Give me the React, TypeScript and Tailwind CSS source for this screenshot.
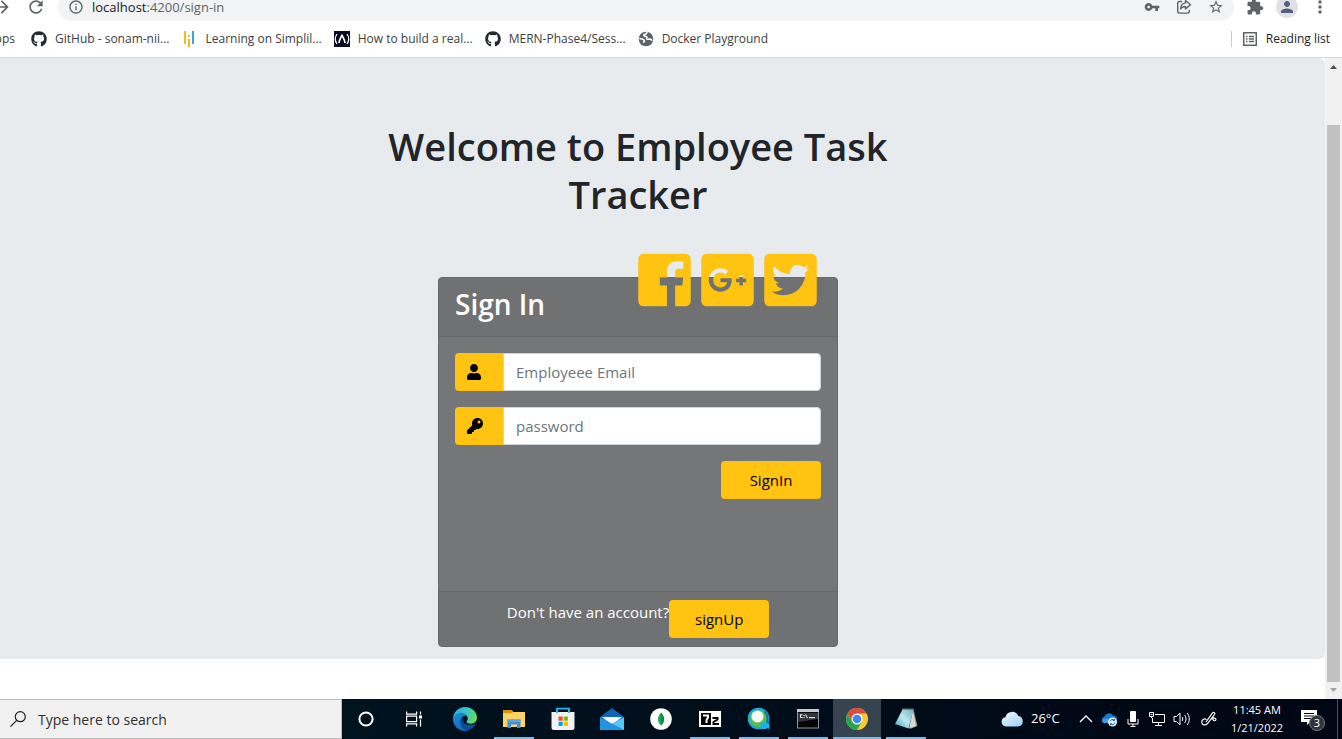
import type { ReactNode } from "react";
import { FaGooglePlusSquare, FaTwitterSquare, FaUser, FaKey, FaGithub } from "react-icons/fa";
import {
  MdArrowForward,
  MdRefresh,
  MdInfoOutline,
  MdVpnKey,
  MdStarBorder,
  MdExtension,
  MdPerson,
  MdMoreVert,
} from "react-icons/md";

function FacebookSquare() {
  return (
    <svg viewBox="0 0 448 512" className="h-[60px] w-[53px]" fill="currentColor" aria-hidden="true">
      <path d="M448 80v352c0 26.500-21.500 48-48 48h-85.300V302.800h60.600l8.700-67.600h-69.300V192c0-19.600 5.400-32.900 33.500-32.900H384V98.700c-6.200-.8-27.400-2.700-52.200-2.700-51.600 0-87 31.500-87 89.400v49.900H184v67.600h60.900V480H48c-26.500 0-48-21.500-48-48V80c0-26.500 21.500-48 48-48h352c26.500 0 48 21.500 48 48z" />
    </svg>
  );
}

function BarsIcon() {
  return (
    <svg viewBox="0 0 16 16" className="size-4" aria-hidden="true">
      <path d="M3 0v13" stroke="#f9b812" strokeWidth="2" />
      <path d="M7 4v2M7 8v8" stroke="#f9b812" strokeWidth="2" />
      <path d="M11 0v13" stroke="#3ba5d8" strokeWidth="2" />
    </svg>
  );
}

function CampIcon() {
  return (
    <svg viewBox="0 0 16 16" className="size-4" fill="none" stroke="#fff" aria-hidden="true">
      <rect width="16" height="16" fill="#0a0a23" stroke="none" />
      <path d="M3 3C.9 6 .9 10 3 13M13 3c2.100 3 2.100 7 0 10" strokeWidth="1.200" />
      <path d="M8 3.500C7.800 6 5.200 8 5 12M8 3.500C8.200 6 10.800 8 11 12" strokeWidth="1.700" />
    </svg>
  );
}

function GlobeIcon() {
  return (
    <svg viewBox="0 0 16 16" className="size-4" aria-hidden="true">
      <circle cx="8" cy="8" r="7.300" fill="#5f6368" />
      <path d="M9.500 1.200C8 2 8.800 3 7 3.200S5.500 5 7 5.300s2.400.6 1.800 1.900 1.600 1 3 .9 2.200 1.500 2.200 1.500M1.300 7.500c2 .2 3.400.5 4.600 1.400s.2 2.300-.9 2.500" fill="none" stroke="#fff" strokeWidth="1.600" />
    </svg>
  );
}

function ShareIcon() {
  return (
    <svg viewBox="0 0 16 16" className="size-4" fill="none" stroke="#5f6368" strokeWidth="1.400" strokeLinejoin="round" aria-hidden="true">
      <path d="M6 2.500H3.500a1.800 1.800 0 0 0-1.800 1.800v8a1.800 1.800 0 0 0 1.800 1.800h8a1.800 1.800 0 0 0 1.800-1.800v-1.500" />
      <path d="M9.500 1.500 14.500 5.700 9.500 9.900V7.500C7 7.500 5.600 8.300 4.600 10c.2-3.200 1.700-5.700 4.900-6.100z" />
    </svg>
  );
}

function ReadingListIcon() {
  return (
    <svg viewBox="0 0 16 16" className="size-4" fill="none" stroke="#5f6368" aria-hidden="true">
      <rect x="1.750" y="1.750" width="12.500" height="12.500" strokeWidth="1.500" />
      <path d="M4 5.500h1.500M4 8h1.500M4 10.500h1.500M6.800 5.500H12M6.800 8H12M6.800 10.500H12" strokeWidth="1.300" />
    </svg>
  );
}

function Bookmark({ icon, label }: { icon: ReactNode; label: string }) {
  return (
    <a href="#" className="flex items-center gap-2 whitespace-nowrap">
      {icon}
      {label}
    </a>
  );
}

function BrowserBar() {
  return (
    <header className="shrink-0 border-b border-[#d5d7d9] bg-white text-[#3c4043]">
      <div className="flex h-[21px] items-end overflow-hidden">
        <div className="flex h-7 w-full shrink-0 items-center text-[#5f6368]">
          <button aria-label="Forward" className="-ml-2">
            <MdArrowForward className="size-5" />
          </button>
          <button aria-label="Reload" className="ml-3.5">
            <MdRefresh className="size-5" />
          </button>
          <div className="ml-3 flex h-7 flex-1 items-center rounded-full bg-[#f1f3f4] pr-2.5 pl-2.5">
            <MdInfoOutline className="size-4" />
            <span className="ml-2 flex-1 text-[13px] leading-[14px]">
              <span className="text-[#202124]">localhost</span>:4200/sign-in
            </span>
            <span className="flex items-center gap-4">
              <MdVpnKey className="size-4" />
              <ShareIcon />
              <MdStarBorder className="size-4" />
            </span>
          </div>
          <button aria-label="Extensions" className="ml-3">
            <MdExtension className="size-[18px]" />
          </button>
          <button aria-label="Profile" className="ml-3 flex size-[22px] items-center justify-center rounded-full bg-[#dee1e6] text-[#55607a]">
            <MdPerson className="size-[18px]" />
          </button>
          <button aria-label="Menu" className="mr-3 ml-3">
            <MdMoreVert className="size-5" />
          </button>
        </div>
      </div>
      <nav className="flex h-9 items-center gap-3 text-xs">
        <a href="#" className="mr-1 flex w-[15px] justify-end overflow-hidden">
          Apps
        </a>
        <Bookmark icon={<FaGithub className="size-4 text-[#24292e]" />} label="GitHub - sonam-nii..." />
        <Bookmark icon={<BarsIcon />} label="Learning on Simplil..." />
        <Bookmark icon={<CampIcon />} label="How to build a real..." />
        <Bookmark icon={<FaGithub className="size-4 text-[#24292e]" />} label="MERN-Phase4/Sess..." />
        <Bookmark icon={<GlobeIcon />} label="Docker Playground" />
        <div className="mr-3 ml-auto flex h-4 items-center border-l border-[#c6c9cd] pl-2.5 text-[#202124]">
          <Bookmark icon={<ReadingListIcon />} label="Reading list" />
        </div>
      </nav>
    </header>
  );
}

const yellowButton = "h-[38px] w-[100px] shrink-0 rounded bg-[#ffc312] text-[15px] text-black";

function Field({ id, label, type, icon }: { id: string; label: string; type: string; icon: ReactNode }) {
  return (
    <div className="mb-4 flex h-[38px]">
      <label htmlFor={id} aria-label={label} className="flex w-12 items-center rounded-l bg-[#ffc312] pl-3 text-black">
        {icon}
      </label>
      <input
        id={id}
        type={type}
        placeholder={label}
        className="min-w-0 flex-1 rounded-r border border-[#ced4da] bg-white px-3 text-[15px] text-[#495057] placeholder:text-[#6c757d]"
      />
    </div>
  );
}

function SignInCard() {
  return (
    <section className="relative flex h-[370px] w-[400px] flex-col rounded border border-[#68696b] bg-[#747677]">
      <div className="h-[59px] border-b border-[#646667] bg-[#6f7173] px-4 py-2">
        <h3 className="text-[28px] leading-9 font-semibold text-white">Sign In</h3>
      </div>
      <div className="absolute -top-7 right-5 flex gap-2.5 text-[#ffc312]">
        <a href="#" aria-label="Facebook">
          <FacebookSquare />
        </a>
        <a href="#" aria-label="Google Plus">
          <FaGooglePlusSquare className="h-[60px] w-[53px]" />
        </a>
        <a href="#" aria-label="Twitter">
          <FaTwitterSquare className="h-[60px] w-[53px]" />
        </a>
      </div>
      <form className="flex-1 p-4">
        <Field id="email" label="Employeee Email" type="email" icon={<FaUser className="h-4 w-3.5" />} />
        <Field id="password" label="password" type="password" icon={<FaKey className="size-4" />} />
        <div className="flex justify-end">
          <button type="button" className={yellowButton}>
            SignIn
          </button>
        </div>
      </form>
      <div className="flex h-[55px] items-start justify-center border-t border-[#646667] bg-[#6f7173] pt-2 text-[15px] leading-6 text-white">
        <span>Don't have an account?</span>
        <button type="button" className={yellowButton}>
          signUp
        </button>
      </div>
    </section>
  );
}

function Scrollbar() {
  return (
    <div className="flex w-[17px] shrink-0 flex-col items-center bg-[#f1f1f1]" aria-hidden="true">
      <svg viewBox="0 0 17 17" className="size-[17px] shrink-0">
        <path d="M5 11h7L8.500 7z" fill="#505050" />
      </svg>
      <div className="mt-[50px] w-[13px] flex-1 bg-[#c1c1c1]" />
      <svg viewBox="0 0 17 17" className="size-[17px] shrink-0">
        <path d="M5 6h7l-3.500 4z" fill="#a3a3a3" />
      </svg>
    </div>
  );
}

function TaskButton({ label, state, children }: { label: string; state?: "open" | "active"; children: ReactNode }) {
  return (
    <button
      aria-label={label}
      className={`relative flex h-10 w-12 items-center justify-center ${state === "active" ? "bg-[#36444f]" : ""}`}
    >
      {children}
      {state && (
        <span className={`absolute bottom-0 h-0.5 bg-[#76b9ed] ${state === "active" ? "inset-x-0" : "inset-x-1"}`} />
      )}
    </button>
  );
}

function Taskbar() {
  return (
    <footer className="flex h-10 shrink-0 items-center bg-gradient-to-r from-[#001822] to-[#000614] text-white">
      <label className="flex h-10 w-[342px] shrink-0 items-center border border-l-0 border-[#bdbdbd] bg-[#f0f0f0] pl-2.5">
        <svg viewBox="0 0 16 16" className="size-4 shrink-0" fill="none" stroke="#222" strokeWidth="1.200" aria-hidden="true">
          <circle cx="10.300" cy="5.700" r="5" />
          <path d="M6.700 9.300.4 15.600" />
        </svg>
        <input
          aria-label="Search"
          placeholder="Type here to search"
          className="ml-3 min-w-0 flex-1 bg-transparent pt-0.5 text-sm placeholder:text-[#303030]"
        />
      </label>
      <TaskButton label="Cortana">
        <svg viewBox="0 0 16 16" className="size-4">
          <circle cx="8" cy="8" r="6.600" fill="none" stroke="#fff" strokeWidth="2" />
        </svg>
      </TaskButton>
      <TaskButton label="Task view">
        <svg viewBox="0 0 18 16" className="h-4 w-[18px]" fill="none" stroke="#fff" strokeWidth="1.200">
          <path d="M1.600.5v2.700h10V.5M1.600 15.500v-2.700h10v2.700M1.600 5.200h10v5.400h-10zM15.500.5v3M15.500 8.500v7" />
          <path d="M14 4.500h3v3h-3z" fill="#fff" stroke="none" />
        </svg>
      </TaskButton>
      <div className="ml-[3px] flex gap-px">
        <TaskButton label="Edge">
          <svg viewBox="0 0 24 24" className="size-6">
            <defs>
              <linearGradient id="edgeTop" x1="0" y1=".3" x2="1" y2=".5">
                <stop offset="0" stopColor="#2aa8e8" />
                <stop offset=".55" stopColor="#35c6c9" />
                <stop offset="1" stopColor="#68df58" />
              </linearGradient>
              <linearGradient id="edgeSide" x1="0" y1="0" x2=".5" y2="1">
                <stop offset="0" stopColor="#1893dc" />
                <stop offset="1" stopColor="#1266b8" />
              </linearGradient>
            </defs>
            <path d="M0 12C0 5 5.500 0 12 0c7 0 12 5 12 10.800 0 3.700-2.800 6-6.200 6-2.800 0-4.300-1-4.300-2 0-.7 1.300-1.300 1.300-3.200 0-2.800-2.800-5.200-6.300-5.200C4.200 6.400 1 9 0 12z" fill="url(#edgeTop)" />
            <path d="M0 12c.4-3.700 4-5.600 8.500-5.600 2.500 0 4.500 1 5.500 2.500-3-.6-6 1.200-6.400 4.700-.4 4.500 3.200 8.800 8.400 9.400-1.200.6-2.600 1-4 1C5.500 24 0 19 0 12z" fill="url(#edgeSide)" />
            <path d="M9.600 9.900c-3.200 2.300-3 7.800 0 11 2 2.100 4.400 2.600 6.400 2.100 2.800-1 5.200-3 6.600-5.300.3-.6-.1-.9-.7-.6-4 1.900-9.800.9-11.700-2.600-.8-1.500-.9-3.200-.6-4.600z" fill="#0c4c96" />
          </svg>
        </TaskButton>
        <TaskButton label="File Explorer" state="open">
          <svg viewBox="0 0 22 20" className="h-5 w-[22px]">
            <path d="M0 1.500h9l1.500 1.500H22v15H0z" fill="#f0b93c" />
            <path d="M0 4.500h9L10.500 3H22v15H0z" fill="#fdd463" />
            <path d="M0 1h8.500L10 2.500 8.500 4H0z" fill="#dc940f" />
            <path d="M4.500 10.500h13V19h-3.500v-3.500H8V19H4.500z" fill="#3c8fd5" />
            <path d="M4.500 10.500h13V13h-13z" fill="#5aa6e2" />
          </svg>
        </TaskButton>
        <TaskButton label="Microsoft Store">
          <svg viewBox="0 0 24 24" className="size-6">
            <path d="M6 6V1.700h12V6" fill="none" stroke="#2fb4e9" strokeWidth="1.800" />
            <path d="M.5 5h23v15.500A2.500 2.500 0 0 1 21 23H3a2.500 2.500 0 0 1-2.500-2.500z" fill="#f1f2f3" />
            <path d="M6 6V3M18 6V3" stroke="#2fb4e9" strokeWidth="1.800" />
            <path d="M7.500 9.500h4.200v4.200H7.500z" fill="#f25022" />
            <path d="M12.700 9.500h4.200v4.200h-4.200z" fill="#7fba00" />
            <path d="M7.500 14.700h4.200v4.200H7.500z" fill="#00a4ef" />
            <path d="M12.700 14.700h4.200v4.200h-4.200z" fill="#ffb900" />
          </svg>
        </TaskButton>
        <TaskButton label="Mail">
          <svg viewBox="0 0 24 24" className="size-6">
            <path d="M0 10 12 1l12 9v12H0z" fill="#1163b5" />
            <path d="M2 10h20L12 18z" fill="#f4f7fa" />
            <path d="M0 10.500 12 17l12-6.500V23H0z" fill="#35b0ee" />
            <path d="M24 10.500V23L12 16.500z" fill="#54c7f6" />
            <path d="M0 10.500V23h24z" fill="#2494e2" />
          </svg>
        </TaskButton>
        <TaskButton label="MongoDB Compass">
          <svg viewBox="0 0 22 22" className="size-[22px]">
            <circle cx="11" cy="11" r="10.800" fill="#fff" />
            <path d="M11 4.500c4 4.500 4 9 0 13-4-4-4-8.500 0-13z" fill="#13aa52" />
            <path d="M11 4.500c4 4.500 4 9 0 13z" fill="#0c8a43" />
          </svg>
        </TaskButton>
        <TaskButton label="7-Zip" state="open">
          <svg viewBox="0 0 24 18" className="h-[18px] w-6">
            <rect x=".5" y=".5" width="23" height="17" fill="#fff" stroke="#111" />
            <rect x="3" y="3" width="10" height="12" fill="#000" />
            <path d="M5 5.500h5v2L8.500 10v3" fill="none" stroke="#fff" strokeWidth="2" />
            <path d="M14.500 8h5v1.500l-4 2.500v2H21" fill="none" stroke="#000" strokeWidth="2" />
          </svg>
        </TaskButton>
        <TaskButton label="Webex" state="open">
          <svg viewBox="0 0 24 24" className="size-6">
            <circle cx="11.500" cy="11.500" r="9.700" fill="#5fbb4a" stroke="#16aee0" strokeWidth="2.200" />
            <circle cx="10.500" cy="9.500" r="6" fill="#f6fbf7" />
            <path d="M17.500 4.500c4.500 4.500 3.500 12-1 14.500" fill="none" stroke="#087b96" strokeWidth="1.800" />
            <path d="M13.500 15.500h6v1.800l3-1.300v6l-3-1v1h-6z" fill="#12b5ef" />
          </svg>
        </TaskButton>
        <TaskButton label="Command Prompt" state="open">
          <svg viewBox="0 0 22 20" className="h-5 w-[22px]">
            <rect x=".5" y=".5" width="21" height="18.500" fill="#050505" stroke="#8d959b" />
            <path d="M0 0h22v3H0z" fill="#c4cbd0" />
            <path d="M1 4h20v6L1 13z" fill="#30363b" />
            <path d="M5.500 5.700H3.500v2.800h2M7 6v1M7 8v1M8.500 5.500l2 3.500M12 8.700h6" fill="none" stroke="#fff" />
          </svg>
        </TaskButton>
        <TaskButton label="Chrome" state="active">
          <svg viewBox="0 0 24 24" className="size-6">
            <circle cx="12" cy="12" r="11" fill="#fbc934" />
            <path d="M2.470 6.500A11 11 0 0 1 21.500 6.500H12L7.200 14.700z" fill="#dd4b3e" />
            <path d="M2.470 6.500A11 11 0 0 0 12 23l4.800-8.200L12 17l-5-2.500z" fill="#2ba24c" />
            <circle cx="12" cy="12" r="5.500" fill="#fff" />
            <circle cx="12" cy="12" r="4.300" fill="#4286f5" />
          </svg>
        </TaskButton>
        <TaskButton label="Notepad" state="open">
          <svg viewBox="0 0 24 22" className="h-[22px] w-6">
            <defs>
              <linearGradient id="pad" x1="0" y1="1" x2="1" y2="0">
                <stop offset="0" stopColor="#3fa0b8" />
                <stop offset=".5" stopColor="#bfe8ef" />
                <stop offset="1" stopColor="#6fb0c0" />
              </linearGradient>
            </defs>
            <path d="M19.500 1.500 23.500 18 16 21z" fill="#9a8b6c" />
            <path d="M19 2 22 18l-7 2.500z" fill="#d5dad8" />
            <path d="M8.500 1.500 19.500 2 14.500 20.500 1 16z" fill="url(#pad)" />
            <path d="M8.500 1.200h11" stroke="#bfc7c9" strokeWidth="1.500" strokeDasharray="1 1" />
          </svg>
        </TaskButton>
      </div>
      <div className="ml-auto flex h-10 items-center">
        <svg viewBox="0 0 22 16" className="h-4 w-[22px]" aria-hidden="true">
          <defs>
            <linearGradient id="cloud" x1="0" y1="0" x2=".8" y2="1">
              <stop offset="0" stopColor="#f4fbff" />
              <stop offset="1" stopColor="#9fd3f5" />
            </linearGradient>
          </defs>
          <path d="M5 15.500a4.700 4.700 0 0 1-.6-9.300A6.800 6.800 0 0 1 17.300 5 5.300 5.300 0 0 1 17 15.500z" fill="url(#cloud)" />
        </svg>
        <span className="ml-2 w-10 text-[13px] whitespace-nowrap">26°C</span>
        <svg viewBox="0 0 14 8" className="ml-2 h-2 w-3.5" fill="none" stroke="#fff" strokeWidth="1.300" aria-hidden="true">
          <path d="m1 7 6-6 6 6" />
        </svg>
        <svg viewBox="0 0 16 16" className="ml-2 size-4" aria-hidden="true">
          <path d="M3.500 12a3.200 3.200 0 0 1-.3-6.300A5 5 0 0 1 12 4.500 4 4 0 0 1 14 12z" fill="#137ad1" />
          <path d="M1 10.500C2 8 5 6.500 8 8.500l3 3.500H3.500A3 3 0 0 1 1 10.500z" fill="#3ba0ea" />
          <circle cx="11.500" cy="11" r="4.500" fill="#e8f3fc" />
          <path d="M9 10.500a2.600 2.600 0 0 1 4.500-1.200V8M14 11.600a2.600 2.600 0 0 1-4.500 1.300v1.300M13.600 9.500h-1.800M9.400 12.700h1.800" fill="none" stroke="#1668b3" />
        </svg>
        <svg viewBox="0 0 12 16" className="ml-2.5 h-4 w-3" aria-hidden="true">
          <rect x="3" width="6" height="11" rx="1" fill="#fff" />
          <path d="M1 8v5h10V8M6 13v2.500M3.500 15.400h5" fill="none" stroke="#fff" />
        </svg>
        <svg viewBox="0 0 16 16" className="ml-2.5 size-4" fill="none" stroke="#fff" aria-hidden="true">
          <path d="M6 3.500h9.500v8H3.500V7M9.500 11.500v3M6 14.500h7M.5 1.500h4v4h-4zM2.500 5.500v1.500" />
          <path d="M1.500 3.500h2" />
        </svg>
        <svg viewBox="0 0 18 16" className="ml-2 h-4 w-[18px]" fill="none" stroke="#fff" aria-hidden="true">
          <path d="M1 5.500h2.500L7 2v12l-3.500-3.500H1zM9 6c1 1 1 3 0 4M11.500 4c2 2 2 6 0 8M14 2c3 3 3 9 0 12" />
        </svg>
        <svg viewBox="0 0 16 16" className="ml-2.5 size-4" fill="none" stroke="#fff" strokeWidth="1.200" aria-hidden="true">
          <path d="M5.500 8.500C3 7 .5 9 .8 11.500S4 15 6.500 12.500L13.500 3.500c1-1.500-.8-3-2-1.600L5 11M10.500 8c2-1.500 4.500-1 4.500.5s-2.500 1.700-3 .2 1-2.200 1-2.200" />
        </svg>
        <div className="ml-3 w-14 text-center text-[11px] leading-[18px] whitespace-nowrap">
          <div>11:45 AM</div>
          <div>1/21/2022</div>
        </div>
        <div className="relative ml-4 size-6">
          <svg viewBox="0 0 24 24" className="size-6" aria-hidden="true">
            <path d="M0 3h16v12H9l-3 3v-3H0z" fill="#fff" />
            <path d="M3 6.500h10M3 9h10M3 11.500h7" stroke="#000614" />
            <circle cx="16" cy="16" r="7.500" fill="#30343b" stroke="#737980" />
          </svg>
          <span className="absolute right-0 bottom-0 flex size-4 items-center justify-center text-[11px]">3</span>
        </div>
        <div className="mr-1 ml-3 h-10 w-px bg-[#4c525c]" />
      </div>
    </footer>
  );
}

export default function App() {
  return (
    <div className="flex min-h-screen flex-col bg-white font-['Open_Sans','Noto_Sans',sans-serif]">
      <BrowserBar />
      <div className="flex flex-1">
        <main className="flex-1">
          <div className="flex flex-col items-center rounded-r-md bg-[#e7ebee] pt-16 pr-[49px] pb-3">
            <h1 className="max-w-[540px] text-center text-[38px] leading-[48px] font-semibold text-[#212529]">
              Welcome to Employee Task Tracker
            </h1>
            <div className="mt-[59px]">
              <SignInCard />
            </div>
          </div>
        </main>
        <Scrollbar />
      </div>
      <Taskbar />
    </div>
  );
}
